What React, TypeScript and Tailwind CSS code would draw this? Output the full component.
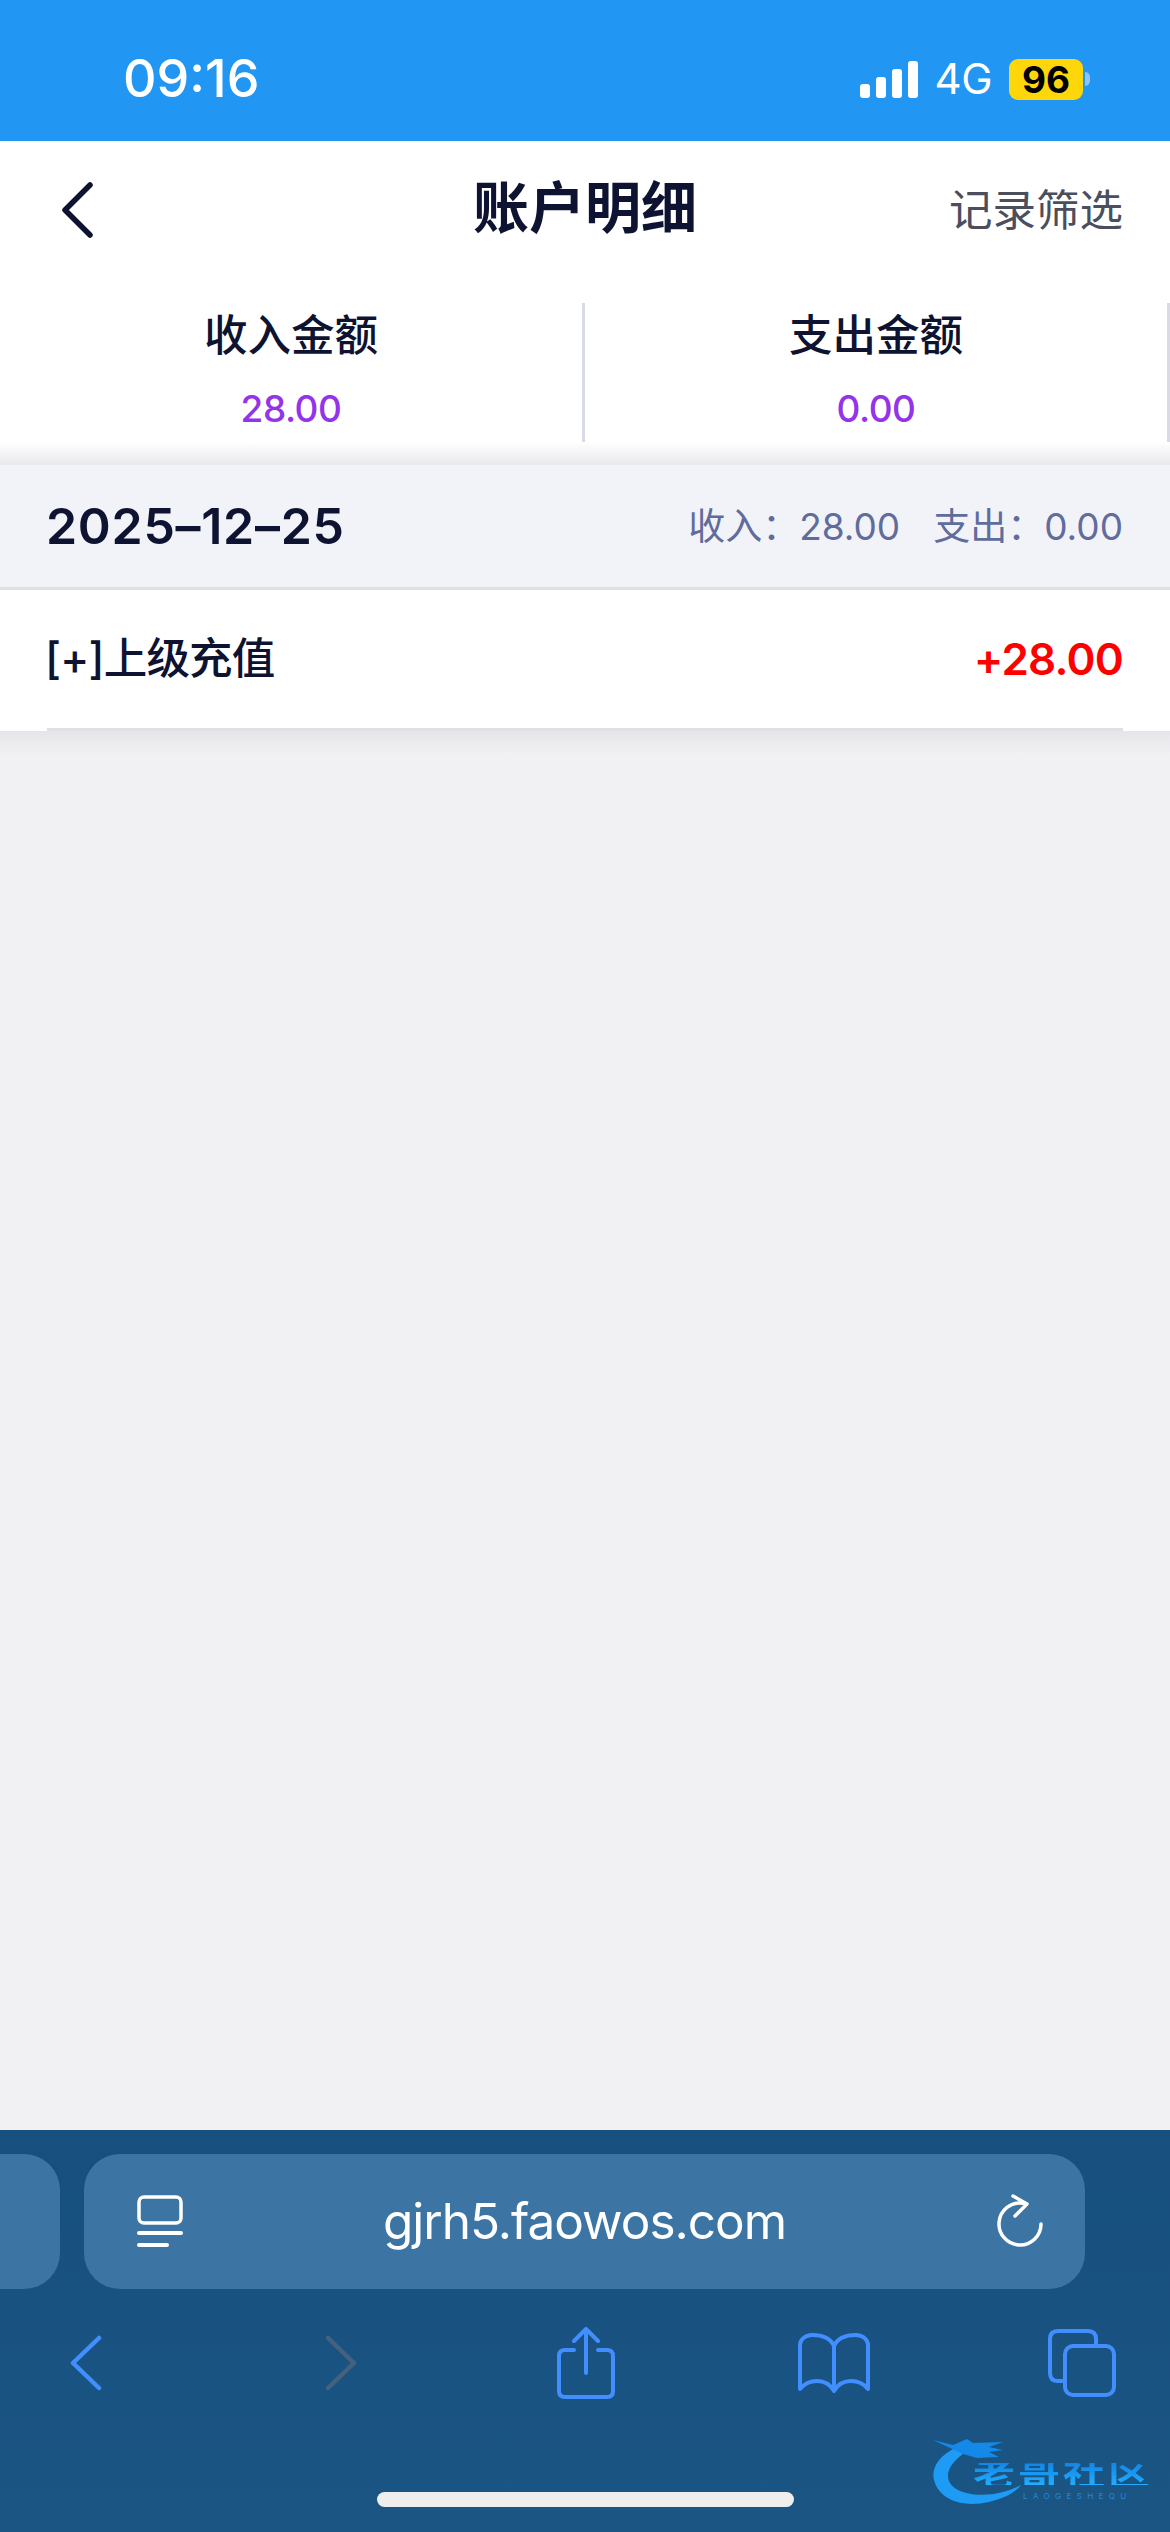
import React from 'react';

const FONT = "font-['Inter','Noto_Sans_CJK_SC',sans-serif]";

const StatusBar = () => (
    <div className="h-[141px] bg-[#2196f3] flex items-start justify-between pt-[50px] pl-[123px] pr-[80px] shrink-0">
        <span className="text-[52px] leading-[58px] font-medium text-white">09:16</span>
        <div className="flex items-center gap-[17px] h-[58px]">
            <svg width="58" height="37" viewBox="0 0 58 37" fill="white" className="mt-[1px]">
                <rect x="0" y="23" width="10" height="14" rx="3" />
                <rect x="16" y="16" width="10" height="21" rx="3" />
                <rect x="32" y="8" width="10" height="29" rx="3" />
                <rect x="48" y="0" width="10" height="37" rx="3" />
            </svg>
            <span className="text-[42px] leading-[58px] font-normal text-white tracking-[-0.5px]">4G</span>
            <div className="flex items-center">
                <div className="w-[74px] h-[41px] rounded-[9px] bg-[#ffd60a] flex items-center justify-center text-[37px] font-bold text-black leading-none">96</div>
                <div className="w-[5px] h-[14px] ml-[2px] rounded-r-full bg-[#8cc4f8]" />
            </div>
        </div>
    </div>
);

const Header = () => (
    <div className="h-[162px] bg-white flex items-center justify-between relative pl-[60px] pr-[47px] shrink-0">
        <svg width="36" height="60" viewBox="0 0 36 60" fill="none" stroke="#0d1330" strokeWidth="5.5" strokeLinecap="round" strokeLinejoin="round" className="mb-[24px]">
            <path d="M30 5 L5 30 L30 55" />
        </svg>
        <h1 className="absolute left-0 right-0 top-[31px] text-center text-[56px] leading-[72px] font-bold text-[#0d1330]">账户明细</h1>
        <span className="text-[43.5px] leading-[60px] text-[#4b4e5c] mb-[24px]">记录筛选</span>
    </div>
);

const Stat = ({ label, value }: { label: string; value: string }) => (
    <div className="w-[585px] h-[139px] border-r-[3px] border-[#d8dbe6] flex flex-col items-center">
        <div className="text-[43.5px] leading-[60px] font-medium text-[#0d1330] mt-[2px]">{label}</div>
        <div className="text-[37px] leading-[44px] font-medium tracking-[-0.5px] text-[#9333ea] mt-[22px]">{value}</div>
    </div>
);

const App: React.FC = () => {
    return (
        <div className={`w-[1170px] h-[2532px] overflow-hidden relative flex flex-col bg-[#f1f1f4] ${FONT}`}>
            <StatusBar />
            <Header />

            <div className="flex bg-white shrink-0">
                <Stat label="收入金额" value="28.00" />
                <Stat label="支出金额" value="0.00" />
            </div>
            <div className="h-[23px] shrink-0 bg-gradient-to-b from-white to-[#e9e9ed]" />

            <div className="h-[125px] shrink-0 bg-[#f2f3f9] border-b-[3px] border-[#e0e0e3] flex items-center justify-between pl-[46px] pr-[47px]">
                <span className="text-[50px] font-semibold text-[#0d1330] leading-none tracking-[0.7px]">2025–12–25</span>
                <div className="flex gap-[33px] text-[37px] text-[#5f6c9c] leading-none">
                    <span>收入：28.00</span>
                    <span>支出：0.00</span>
                </div>
            </div>

            <div className="h-[141px] shrink-0 bg-white px-[47px] flex flex-col">
                <div className="flex-1 flex items-center justify-between">
                    <span className="text-[43.5px] font-medium text-[#0d1330] leading-none tracking-[-0.8px] -ml-[2px]">[+]上级充值</span>
                    <span className="text-[44px] font-semibold text-[#ff0000] leading-none tracking-[-0.8px]">+28.00</span>
                </div>
                <div className="h-[3px] bg-[#e0e0e3]" />
            </div>
            <div className="h-[24px] shrink-0 bg-gradient-to-b from-[#e6e6ea] to-[#f1f1f4]" />

            <div className="flex-1" />

            <div className="h-[402px] shrink-0 bg-gradient-to-b from-[#17507f] to-[#1b5584] flex flex-col relative">
                <div className="flex gap-[24px] mt-[24px] -ml-[300px]">
                    <div className="w-[360px] h-[135px] rounded-[36px] bg-[#3c74a3]" />
                    <div className="w-[1001px] h-[135px] rounded-[36px] bg-[#3c74a3] flex items-center justify-between pl-[53px] pr-[42px] relative">
                        <svg width="46" height="54" viewBox="0 0 46 54" fill="none" stroke="white" strokeLinecap="round">
                            <rect x="2" y="2" width="42" height="26" rx="5" strokeWidth="3.5" />
                            <path d="M2 38 H44" strokeWidth="4" />
                            <path d="M2 50 H30" strokeWidth="4" />
                        </svg>
                        <span className="absolute left-0 right-0 text-center text-[49.5px] leading-[60px] tracking-[-1px] text-white font-normal mb-[2px]">gjrh5.faowos.com</span>
                        <svg width="46" height="56" viewBox="0 0 46 56" fill="none" stroke="white" strokeWidth="3.5" strokeLinecap="round" strokeLinejoin="round">
                            <path d="M26 9.2 A21 21 0 1 0 44 30" />
                            <path d="M16 2 L30 10 L18 22" />
                        </svg>
                    </div>
                </div>

                <div className="flex items-center mt-[38px] h-[71px] pl-[70px]">
                    <svg width="32" height="56" viewBox="0 0 32 56" fill="none" stroke="#428eff" strokeWidth="4.5" strokeLinecap="round" strokeLinejoin="round">
                        <path d="M29 3 L3 28 L29 53" />
                    </svg>
                    <svg width="32" height="56" viewBox="0 0 32 56" fill="none" stroke="#46617c" strokeWidth="4.5" strokeLinecap="round" strokeLinejoin="round" className="ml-[223px]">
                        <path d="M3 3 L29 28 L3 53" />
                    </svg>
                    <svg width="58" height="72" viewBox="0 0 58 72" fill="none" stroke="#428eff" strokeWidth="4" strokeLinecap="round" strokeLinejoin="round" className="ml-[200px]">
                        <path d="M17 23 H8 Q2 23 2 29 V64 Q2 70 8 70 H50 Q56 70 56 64 V29 Q56 23 50 23 H41" />
                        <path d="M29 46 V2 M17 14 L29 2 L41 14" />
                    </svg>
                    <svg width="72" height="60" viewBox="0 0 72 60" fill="none" stroke="#428eff" strokeWidth="4" strokeLinecap="round" strokeLinejoin="round" className="ml-[183px]">
                        <path d="M36 13 C32 4 22 2 14 2 C7 2 2 7 2 12 V56 C10 46 28 44 36 58 C44 44 62 46 70 56 V12 C70 7 65 2 58 2 C50 2 40 4 36 13 Z" />
                        <path d="M36 13 V56" />
                    </svg>
                    <svg width="68" height="68" viewBox="0 0 68 68" fill="none" stroke="#428eff" strokeWidth="4" strokeLinecap="round" strokeLinejoin="round" className="ml-[178px]">
                        <path d="M14 52 H10 Q2 52 2 44 V10 Q2 2 10 2 H40 Q48 2 48 10 V16" />
                        <rect x="17" y="17" width="49" height="49" rx="8" />
                    </svg>
                </div>

                <div className="w-[417px] h-[15px] rounded-full bg-[#eeeeee] mt-[94px] self-center ml-[1px]" />

                {/* watermark */}
                <div className="absolute left-[933px] top-[308px] w-[220px] h-[68px]">
                    <svg width="110" height="68" viewBox="0 0 110 68" fill="none" className="absolute left-0 top-0">
                        <path d="M22 10 C6 18 -2 30 1 42 C6 62 30 70 56 64 C70 61 82 55 88 47 C72 56 48 60 30 54 C12 48 8 32 30 16 Z" fill="#1d9bf5" />
                        <path d="M0 2 L20 7 L34 1 L40 5 L70 4 L56 9 L70 12 L56 14 L66 19 L44 20 L30 16 Z" fill="#1489ea" />
                    </svg>
                    <span className="absolute left-[40px] top-[21px] whitespace-nowrap text-[42px] leading-[30px] tracking-[3px] font-bold text-transparent bg-clip-text bg-gradient-to-b from-[#1484e4] to-[#22aeff] scale-y-[0.75]">老哥社区</span>
                    <span className="absolute left-[90px] top-[53px] whitespace-nowrap text-[8px] leading-[10px] tracking-[5.4px] text-[#2a86cf]">LAOGESHEQU</span>
                </div>
            </div>
        </div>
    );
};

export default App;
